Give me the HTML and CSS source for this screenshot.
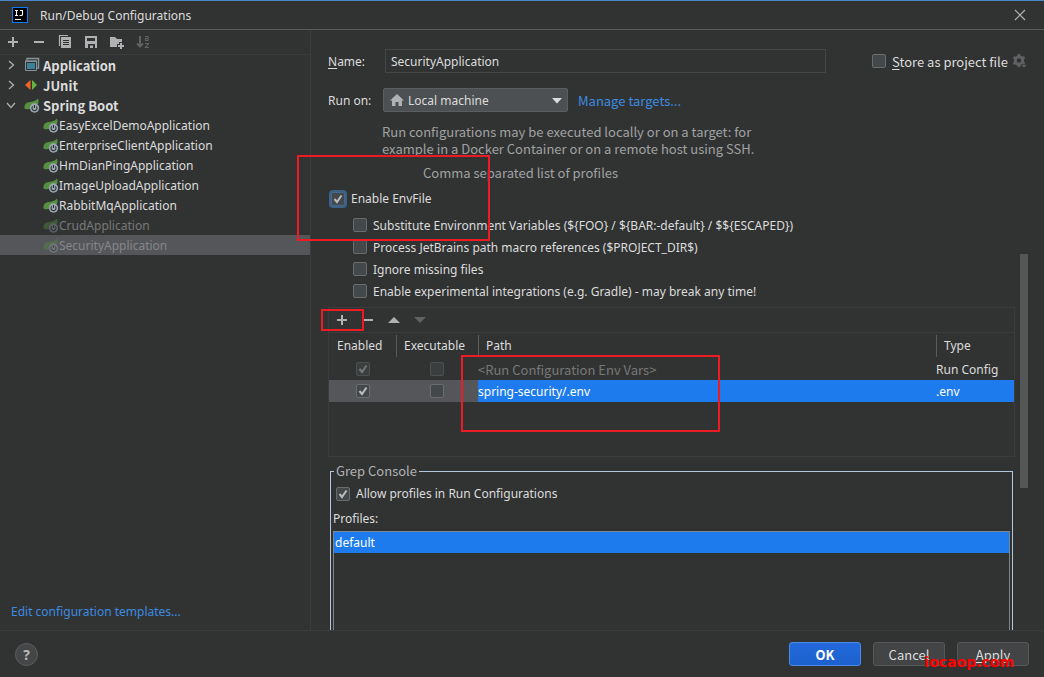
FILE: index.html
```html
<!DOCTYPE html>
<html lang="en">
<head>
  <meta charset="UTF-8" />
  <meta name="viewport" content="width=device-width, initial-scale=1" />
  <title>Run/Debug Configurations</title>
  <link rel="stylesheet" href="styles.css">
</head>
<body>
  <svg class="defs" width="0" height="0" aria-hidden="true">
    <symbol id="spring" viewBox="0 0 16 16">
      <path d="M0.500 11.500C0 7 2.500 5.500 6 5C10 4.500 12.500 3.500 14 1.500C15 4 14.500 6 14 7L9 7.500L5.500 12C4 12.500 2 12.500 0.500 11.500Z" fill="#559040" />
      <circle cx="10.500" cy="11" r="4.700" fill="#9aa7b0" />
      <path d="M8.800 9.300A2.500 2.500 0 1 0 12.200 9.300M10.500 8V11" fill="none" stroke="#313333" stroke-width="1.100" />
    </symbol>
    <symbol id="chevron" viewBox="0 0 10 10">
      <path d="M3 1L7.500 5L3 9" fill="none" stroke="#adadad" stroke-width="1.300" />
    </symbol>
  </svg>

  <header class="titlebar">
    <svg class="logo" width="16" height="16" viewBox="0 0 16 16">
      <rect x="0.500" y="0.500" width="15" height="15" fill="#000" stroke="#087cfa" />
      <path d="M3 3.500H6M4.500 3.500V8.500M3 8.500H6M8 3.500H11M10.500 3.500V7.500Q10.500 8.500 9 8.500H7.500M3 12.500H9" fill="none" stroke="#fff" stroke-width="1.100" />
    </svg>
    <h1>Run/Debug Configurations</h1>
    <button class="icon-btn" type="button" aria-label="Close">
      <svg width="12" height="12" viewBox="0 0 12 12"><path d="M1 1L11 11M11 1L1 11" stroke="#b4b4b4" stroke-width="1.200" /></svg>
    </button>
  </header>

  <div class="dialog">
    <aside class="sidebar">
      <div class="toolbar">
        <button class="icon-btn" type="button" aria-label="Add">
          <svg width="16" height="16" viewBox="0 0 16 16"><path d="M8 3V13M3 8H13" stroke="#afb1b3" stroke-width="2" /></svg>
        </button>
        <button class="icon-btn" type="button" aria-label="Remove">
          <svg width="16" height="16" viewBox="0 0 16 16"><path d="M3 8H13" stroke="#afb1b3" stroke-width="2" /></svg>
        </button>
        <button class="icon-btn" type="button" aria-label="Copy">
          <svg width="16" height="16" viewBox="0 0 16 16"><path d="M2.500 12V1.500H11" fill="none" stroke="#afb1b3" stroke-width="1.200" /><path d="M4 3H14V14H4Z" fill="#afb1b3" /><path d="M6 6.500H12M6 8.500H12M6 10.500H12" stroke="#313333" /></svg>
        </button>
        <button class="icon-btn" type="button" aria-label="Save">
          <svg width="16" height="16" viewBox="0 0 16 16"><path d="M2 2H14V14H12V10H5V14H2Z" fill="#afb1b3" /><path d="M4 4H12V7H4Z" fill="#313333" /><path d="M7 11.500H10V14H7Z" fill="#afb1b3" /></svg>
        </button>
        <button class="icon-btn" type="button" aria-label="New folder">
          <svg width="16" height="16" viewBox="0 0 16 16"><path d="M1 3H6L8 5H13V8H10V10H8V13H1Z" fill="#afb1b3" /><path d="M12 9V15M9 12H15" stroke="#afb1b3" stroke-width="2" /></svg>
        </button>
        <button class="icon-btn" type="button" aria-label="Sort" disabled>
          <svg width="16" height="16" viewBox="0 0 16 16"><path d="M5 2V12M2 9.500L5 12.500L8 9.500" fill="none" stroke="#5f6162" stroke-width="2" /><path d="M10 2.500H13V6.500H10.500V4.500H13M10 9.500H13.500L10.500 13.500H14" fill="none" stroke="#5f6162" stroke-width="1.200" /></svg>
        </button>
      </div>

      <ul class="tree">
        <li class="group">
          <svg width="10" height="10"><use href="#chevron" /></svg>
          <svg width="16" height="16" viewBox="0 0 16 16"><path d="M3 3V1.500H14.500V11H13" fill="none" stroke="#87939a" stroke-width="1.500" /><path d="M1.500 4H12.500V13.500H1.500Z" fill="none" stroke="#87939a" /><path d="M1 3.500H13V5H1Z" fill="#87939a" /><path d="M3 6H11V12H3Z" fill="#398299" /></svg>
          Application
        </li>
        <li class="group">
          <svg width="10" height="10"><use href="#chevron" /></svg>
          <svg width="16" height="16" viewBox="0 0 16 16"><path d="M6.500 3V13L1 8Z" fill="#f26522" /><path d="M8 3V13L13 8Z" fill="#62b543" /></svg>
          JUnit
        </li>
        <li class="group">
          <svg class="open" width="10" height="10"><use href="#chevron" /></svg>
          <svg width="16" height="16"><use href="#spring" /></svg>
          Spring Boot
        </li>
        <li><svg width="16" height="16"><use href="#spring" /></svg>EasyExcelDemoApplication</li>
        <li><svg width="16" height="16"><use href="#spring" /></svg>EnterpriseClientApplication</li>
        <li><svg width="16" height="16"><use href="#spring" /></svg>HmDianPingApplication</li>
        <li><svg width="16" height="16"><use href="#spring" /></svg>ImageUploadApplication</li>
        <li><svg width="16" height="16"><use href="#spring" /></svg>RabbitMqApplication</li>
        <li class="dim"><svg width="16" height="16"><use href="#spring" /></svg>CrudApplication</li>
        <li class="dim selected"><svg width="16" height="16"><use href="#spring" /></svg>SecurityApplication</li>
      </ul>

      <a class="templates" href="#">Edit configuration templates...</a>
    </aside>

    <main class="settings">
      <div class="name-row">
        <label class="field-label" for="name"><u>N</u>ame:</label>
        <input class="text-input" id="name" type="text" value="SecurityApplication" />
        <label class="check wide"><input type="checkbox" /><span><u>S</u>tore as project file</span></label>
        <svg class="gear" width="16" height="16" viewBox="0 0 16 16"><circle cx="7" cy="7.500" r="3.700" fill="none" stroke="#5f6162" stroke-width="3" /><path d="M7 1V4M7 11V14M1.400 4.200L4 5.700M10 9.300L12.600 10.800M1.400 10.800L4 9.300M10 5.700L12.600 4.200" stroke="#5f6162" stroke-width="2.600" /><path d="M9 11.500H15L12 15Z" fill="#5f6162" stroke="#313333" stroke-width="0.500" /></svg>
      </div>

      <div class="run-row">
        <label class="field-label" for="target">Run on:</label>
        <div class="combo">
          <select id="target">
            <option>Local machine</option>
          </select>
          <svg class="combo-icon" width="14" height="14" viewBox="0 0 14 14"><path d="M7 1L14 7.500H12V13H8.500V9H5.500V13H2V7.500H0Z" fill="#afb1b3" /></svg>
          <svg class="combo-arrow" width="10" height="6" viewBox="0 0 10 6"><path d="M0 0H10L5 5.500Z" fill="#dcdcdc" /></svg>
        </div>
        <a class="wide" href="#">Manage targets...</a>
      </div>

      <div class="scroll-area">
        <div class="content">
          <p class="hint wide">Run configurations may be executed locally or on a target: for<br>example in a Docker Container or on a remote host using SSH.</p>
          <p class="profiles-hint wide">Comma separated list of profiles</p>

          <label class="check enable focused"><input type="checkbox" checked />Enable EnvFile</label>
          <div class="options">
            <label class="check"><input type="checkbox" />Substitute Environment Variables (${FOO} / ${BAR:-default} / $${ESCAPED})</label>
            <label class="check"><input type="checkbox" />Process JetBrains path macro references ($PROJECT_DIR$)</label>
            <label class="check"><input type="checkbox" />Ignore missing files</label>
            <label class="check"><input type="checkbox" />Enable experimental integrations (e.g. Gradle) - may break any time!</label>
          </div>

          <section class="env-files">
            <div class="env-toolbar">
              <button class="icon-btn" type="button" aria-label="Add file">
                <svg width="16" height="16" viewBox="0 0 16 16"><path d="M8 3V13M3 8H13" stroke="#afb1b3" stroke-width="2" /></svg>
              </button>
              <button class="icon-btn" type="button" aria-label="Remove file">
                <svg width="16" height="16" viewBox="0 0 16 16"><path d="M3 8H13" stroke="#afb1b3" stroke-width="2" /></svg>
              </button>
              <button class="icon-btn" type="button" aria-label="Move up">
                <svg width="16" height="16" viewBox="0 0 16 16"><path d="M2 11H14L8 5Z" fill="#afb1b3" /></svg>
              </button>
              <button class="icon-btn" type="button" aria-label="Move down" disabled>
                <svg width="16" height="16" viewBox="0 0 16 16"><path d="M2 5H14L8 11Z" fill="#5f6162" /></svg>
              </button>
            </div>
            <table>
              <thead>
                <tr><th class="col-enabled">Enabled</th><th class="col-exec">Executable</th><th>Path</th><th class="col-type">Type</th></tr>
              </thead>
              <tbody>
                <tr>
                  <td class="tick"><input type="checkbox" aria-label="Enabled" checked disabled /></td>
                  <td class="tick"><input type="checkbox" aria-label="Executable" disabled /></td>
                  <td class="muted wide">&lt;Run Configuration Env Vars&gt;</td>
                  <td>Run Config</td>
                </tr>
                <tr class="active">
                  <td class="tick"><input type="checkbox" aria-label="Enabled" checked /></td>
                  <td class="tick"><input type="checkbox" aria-label="Executable" /></td>
                  <td>spring-security/.env</td>
                  <td>.env</td>
                </tr>
              </tbody>
            </table>
            <div class="mark mark-path"></div>
            <div class="mark mark-add"></div>
          </section>

          <fieldset class="grep">
            <legend class="wide">Grep Console</legend>
            <label class="check"><input type="checkbox" checked />Allow profiles in Run Configurations</label>
            <p>Profiles:</p>
            <ul class="profiles">
              <li>default</li>
            </ul>
          </fieldset>
          <div class="mark mark-enable"></div>
        </div>

        <div class="scrollbar"><div class="thumb"></div></div>
      </div>
    </main>
  </div>

  <footer class="footer">
    <button class="help" type="button" aria-label="Help">?</button>
    <button class="btn primary" type="button">OK</button>
    <button class="btn" type="button">Cancel</button>
    <button class="btn" type="button"><u>A</u>pply</button>
    <span class="watermark">iocaop.com</span>
  </footer>
</body>
</html>
```

FILE: styles.css
```css
* { box-sizing: border-box; }

body {
  margin: 0;
  height: 100vh;
  display: flex;
  flex-direction: column;
  overflow: hidden;
  border-top: 1px solid #4a88c7;
  background: #313333;
  color: #dcdcdc;
  font-family: "Noto Sans", "Noto Sans CJK SC", sans-serif;
  font-size: 12px;
  line-height: 17px;
}

button, input, select { font: inherit; color: inherit; }
ul, p, h1 { margin: 0; padding: 0; }
ul { list-style: none; }
svg { flex: none; }
a { color: #3d8be0; text-decoration: none; }
u { text-underline-offset: 2px; }

.defs { position: absolute; }

.wide, .group, .btn {
  font-family: "Noto Sans CJK SC", "Noto Sans", sans-serif;
  font-size: 13px;
}

.icon-btn {
  display: flex;
  padding: 0;
  border: none;
  background: none;
}

.titlebar {
  display: flex;
  align-items: center;
  gap: 12px;
  height: 29px;
  padding: 0 18px 0 12px;
  border-bottom: 1px solid #5a5c5c;
}

.titlebar h1 {
  flex: 1;
  font-size: 12px;
  font-weight: normal;
}

.dialog {
  flex: 1;
  display: flex;
  min-height: 0;
}

/* left tree */
.sidebar {
  display: flex;
  flex-direction: column;
  flex: none;
  width: 311px;
  border-right: 1px solid #3b3d3d;
}

.toolbar {
  display: flex;
  align-items: center;
  gap: 10px;
  height: 25px;
  padding-left: 5px;
  border-bottom: 1px solid #3b3d3d;
}

.tree { flex: 1; }

.tree li {
  display: flex;
  align-items: center;
  height: 20px;
  padding-left: 43px;
  white-space: nowrap;
}

.tree .group {
  gap: 3px;
  padding-left: 6px;
  font-weight: bold;
}

.tree .group svg:first-child { margin-right: 5px; }
.tree .open { transform: rotate(90deg); }
.tree .dim { color: #777979; }
.tree .dim svg { opacity: 0.4; }
.tree .selected { background: #55565a; color: #858789; }

.templates { padding: 0 11px 10px; }

/* right side */
.settings {
  flex: 1;
  display: flex;
  flex-direction: column;
  min-width: 0;
  padding: 19px 16px 0 17px;
}

.name-row, .run-row {
  display: flex;
  align-items: center;
  height: 24px;
}

.run-row { margin-top: 15px; }
.field-label { width: 55px; }

.text-input {
  flex: 1;
  min-width: 0;
  height: 24px;
  margin: 0 46px 0 2px;
  padding: 0 5px;
  border: 1px solid #454747;
  background: none;
}

.gear { margin: 0 0 0 4px; }

.combo {
  position: relative;
  width: 185px;
  margin-right: 10px;
}

.combo select {
  display: block;
  width: 100%;
  height: 24px;
  padding: 0 24px;
  border: 1px solid #5b5d5f;
  border-radius: 2px;
  background: #4c5052;
  appearance: none;
}

.combo-icon { position: absolute; left: 7px; top: 5px; }
.combo-arrow { position: absolute; right: 6px; top: 10px; }

.check {
  display: flex;
  align-items: center;
  gap: 6px;
  white-space: nowrap;
}

input[type="checkbox"] {
  flex: none;
  width: 14px;
  height: 14px;
  margin: 0;
  border: 1px solid #6b6d6d;
  border-radius: 2px;
  background: #43494a center no-repeat;
  appearance: none;
}

input[type="checkbox"]:checked {
  background-image: url("data:image/svg+xml,%3Csvg xmlns='http://www.w3.org/2000/svg' width='12' height='12'%3E%3Cpath d='M2.500 6L5 9L9.500 2.500' fill='none' stroke='%23bbb' stroke-width='2'/%3E%3C/svg%3E");
}

input[type="checkbox"]:disabled { opacity: 0.5; }

.focused input[type="checkbox"] {
  border-color: #43698e;
  box-shadow: 0 0 0 2px #3d6185;
}

.scroll-area {
  flex: 1;
  display: flex;
  gap: 5px;
  min-height: 0;
  margin-top: 11px;
}

.content {
  position: relative;
  flex: 1;
  display: flex;
  flex-direction: column;
  min-width: 0;
}

.hint {
  padding-left: 54px;
  color: #a0a2a2;
}

.profiles-hint {
  margin-top: 7px;
  padding-left: 95px;
  color: #a0a2a2;
}

.enable {
  margin: 9px 0 7px;
  padding-left: 3px;
}

.options { padding-left: 25px; }
.options .check { height: 22px; }

.env-files {
  position: relative;
  flex: none;
  height: 150px;
  margin-top: 5px;
  border: 1px solid #3b3d3d;
}

.env-toolbar {
  display: flex;
  align-items: center;
  gap: 10px;
  height: 25px;
  padding-left: 5px;
  border-bottom: 1px solid #3b3d3d;
}

table {
  width: 100%;
  table-layout: fixed;
  border-collapse: collapse;
}

th, td { padding: 0; text-align: left; font-weight: normal; }

th {
  height: 25px;
  padding-left: 8px;
  background: linear-gradient(#5a5c5c, #5a5c5c) left center / 1px 22px no-repeat;
}

.col-enabled { width: 67px; background: none; }
.col-exec { width: 82px; }
.col-type { width: 78px; }

td { height: 22px; }
.tick { text-align: center; line-height: 0; }
.muted { color: #777979; }
.active { background: #1d7bed; color: #fff; }
.active .tick { background: #55565a; }

.grep {
  flex: 1;
  display: flex;
  flex-direction: column;
  min-width: 0;
  min-height: 0;
  margin: 6px 2px 0 2px;
  padding: 0 2px;
  border: 1px solid #b4c8dc;
  border-bottom: none;
}

.grep legend {
  margin-left: 1px;
  padding: 0 2px;
  color: #b0b2b2;
  line-height: 16px;
}

.grep .check { margin: 6px 0 8px; padding-left: 3px; }

.profiles {
  flex: 1;
  margin-top: 4px;
  border: 1px solid #7b858f;
  border-bottom: none;
}

.profiles li {
  padding: 2px 1px;
  background: #1d7bed;
  color: #fff;
}

.scrollbar {
  display: flex;
  flex-direction: column;
  width: 8px;
}

.scrollbar::before { content: ""; flex: 131; }
.scrollbar::after { content: ""; flex: 142; }
.thumb { flex: 234; background: #555757; }

/* red callout boxes drawn over the settings */
.mark {
  position: absolute;
  border: 2px solid #ed1c24;
  pointer-events: none;
}

.mark-enable { left: -31px; top: 32px; width: 193px; height: 86px; }
.mark-add { left: -8px; top: 1px; width: 43px; height: 22px; }
.mark-path { left: 132px; top: 47px; width: 259px; height: 77px; }

.footer {
  position: relative;
  display: flex;
  align-items: center;
  gap: 12px;
  height: 47px;
  padding: 0 15px;
  border-top: 1px solid #3b3d3d;
}

.help {
  width: 23px;
  height: 23px;
  margin-right: auto;
  padding: 0;
  border: 1px solid #5b5d5f;
  border-radius: 50%;
  background: #454647;
  color: #bbb;
  font-size: 14px;
  font-weight: bold;
}

.btn {
  width: 72px;
  height: 24px;
  padding: 0;
  border: 1px solid #565858;
  border-radius: 3px;
  background: #434445;
}

.primary {
  border-color: #4c8be8;
  background: linear-gradient(#2369dc, #1c61cc);
  color: #fff;
  font-weight: bold;
}

.watermark {
  position: absolute;
  right: 30px;
  bottom: 6px;
  color: #f00;
  font: bold 14px/18px "DejaVu Sans", sans-serif;
}
```
